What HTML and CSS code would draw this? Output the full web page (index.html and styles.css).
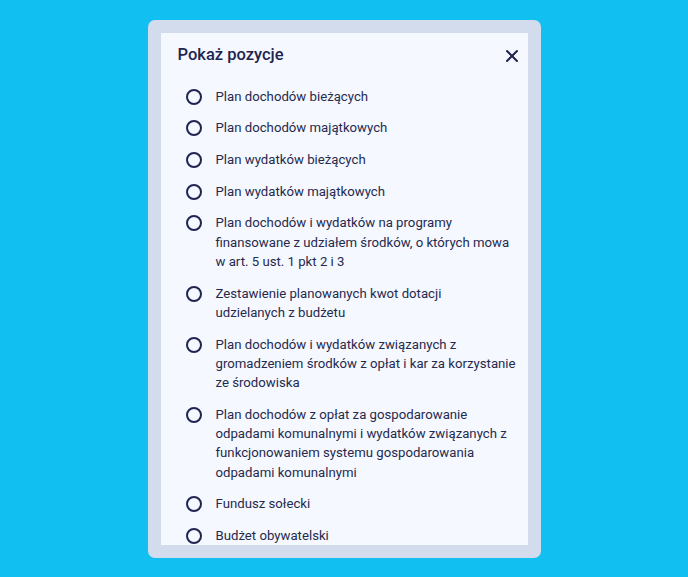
FILE: index.html
```html
<!DOCTYPE html>
<html lang="pl">
<head>
    <meta charset="UTF-8">
    <meta name="viewport" content="width=device-width, initial-scale=1.0">
    <title>Pokaż pozycje</title>
    <link rel="stylesheet" href="styles.css">
</head>
<body>
    <div class="modal">
        <div class="panel">
            <div class="panel-head">
                <h2>Pokaż pozycje</h2>
                <button class="close" aria-label="Zamknij">
                    <svg width="12" height="12" viewBox="0 0 12 12"><path d="M1 1L11 11M11 1L1 11" stroke="#1f2450" stroke-width="2" stroke-linecap="round"/></svg>
                </button>
            </div>
            <ul class="options">
                <li><span class="radio"></span><span>Plan dochodów bieżących</span></li>
                <li><span class="radio"></span><span>Plan dochodów majątkowych</span></li>
                <li><span class="radio"></span><span>Plan wydatków bieżących</span></li>
                <li><span class="radio"></span><span>Plan wydatków majątkowych</span></li>
                <li><span class="radio"></span><span>Plan dochodów i wydatków na programy finansowane z udziałem środków, o których mowa w art. 5 ust. 1 pkt 2 i 3</span></li>
                <li><span class="radio"></span><span>Zestawienie planowanych kwot dotacji<br>udzielanych z budżetu</span></li>
                <li><span class="radio"></span><span>Plan dochodów i wydatków związanych z gromadzeniem środków z opłat i kar za korzystanie ze środowiska</span></li>
                <li><span class="radio"></span><span>Plan dochodów z opłat za gospodarowanie odpadami komunalnymi i wydatków związanych z funkcjonowaniem systemu gospodarowania odpadami komunalnymi</span></li>
                <li><span class="radio"></span><span>Fundusz sołecki</span></li>
                <li><span class="radio"></span><span>Budżet obywatelski</span></li>
            </ul>
        </div>
    </div>
</body>
</html>
```

FILE: styles.css
```css
body {
    margin: 0;
    height: 577px;
    background: #11bff1;
    font-family: Roboto, "Noto Sans", sans-serif;
    color: #262a4e;
    display: flex;
    align-items: center;
    justify-content: center;
    overflow: hidden;
}
.modal {
    width: 367px;
    height: 512px;
    padding: 13px;
    background: #d3dcec;
    border-radius: 7px;
}
.panel {
    height: 100%;
    background: #f5f8fe;
    overflow: hidden;
    padding: 0 10px 0 17px;
    box-sizing: border-box;
}
.panel-head {
    display: flex;
    align-items: center;
    justify-content: space-between;
    height: 46px;
}
.panel-head h2 {
    margin: 0 0 2px;
    font-size: 16.5px;
    font-weight: 500;
    color: #1f2450;
}
.close {
    border: none;
    background: none;
    padding: 0;
    width: 12px;
    height: 12px;
    cursor: pointer;
}
.close svg {
    display: block;
}
.options {
    list-style: none;
    margin: 0;
    padding: 8px 0 0 8px;
    display: flex;
    flex-direction: column;
    gap: 12.4px;
}
.options li {
    display: flex;
    align-items: flex-start;
    gap: 14px;
    font-size: 13.2px;
    line-height: 19.3px;
}
.radio {
    flex: none;
    width: 16px;
    height: 16px;
    border: 2px solid #1f2450;
    border-radius: 50%;
    box-sizing: border-box;
    margin-top: 2px;
}
```
